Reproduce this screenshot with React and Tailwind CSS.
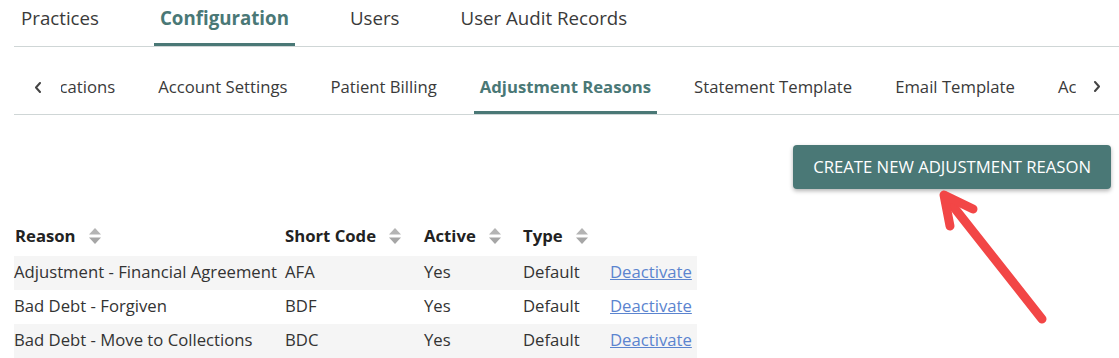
import React from 'react';

const mainTabs = ['Practices', 'Configuration', 'Users', 'User Audit Records'];
const subTabs = [
  'Notifications',
  'Account Settings',
  'Patient Billing',
  'Adjustment Reasons',
  'Statement Template',
  'Email Template',
  'Account Types',
];

const rows = [
  { reason: 'Adjustment - Financial Agreement', code: 'AFA', active: 'Yes', type: 'Default' },
  { reason: 'Bad Debt - Forgiven', code: 'BDF', active: 'Yes', type: 'Default' },
  { reason: 'Bad Debt - Move to Collections', code: 'BDC', active: 'Yes', type: 'Default' },
];

function SortIcon() {
  return (
    <svg width="12" height="16" viewBox="0 0 12 16" className="ml-[13px] shrink-0">
      <path d="M6 0 L12 6.5 H0 Z" fill="#b4b4b4" />
      <path d="M6 16 L12 9.5 H0 Z" fill="#a6a6a6" />
    </svg>
  );
}

function Chevron({ dir }) {
  return (
    <svg width="8" height="11" viewBox="0 0 8 11">
      <path
        d={dir === 'left' ? 'M6 1 L2 5.5 L6 10' : 'M2 1 L6 5.5 L2 10'}
        fill="none"
        stroke="#444"
        strokeWidth="2"
        strokeLinecap="round"
        strokeLinejoin="round"
      />
    </svg>
  );
}

function Th({ children, w }) {
  return (
    <th className={`${w} pl-[1px] pt-[3px] pb-[9px] text-left font-bold`}>
      <div className="flex items-center">
        <span>{children}</span>
        <SortIcon />
      </div>
    </th>
  );
}

export default function App() {
  return (
    <div
      className="relative w-[1119px] h-[358px] overflow-hidden bg-white text-[#333]"
      style={{ fontFamily: '"Open Sans", "DejaVu Sans", sans-serif' }}
    >
      {/* main tabs */}
      <nav className="ml-[14px] pl-[1px] flex gap-[49px] border-b border-[#cfd6d6]">
        {mainTabs.map((t) => (
          <div
            key={t}
            className={`h-[46px] px-[6px] pt-[5px] text-[18.7px] leading-[26px] border-b-[3px] ${
              t === 'Configuration'
                ? 'border-[#4a7876] text-[#4a7876] font-bold'
                : 'border-transparent text-[#3a3a3a]'
            }`}
          >
            {t}
          </div>
        ))}
      </nav>

      {/* sub tabs */}
      <div className="ml-[14px] mt-[20px] flex border-b border-[#cfd6d6]">
        <button className="w-[47px] h-[47px] flex items-start justify-center pt-[15px] pl-[1px]">
          <Chevron dir="left" />
        </button>
        <div className="flex-1 overflow-hidden">
          <div className="flex gap-[31px] ml-[-50px] whitespace-nowrap">
            {subTabs.map((t) => (
              <div
                key={t}
                className={`h-[47px] px-[6px] pt-[9px] text-[16.7px] leading-[22px] border-b-[3px] ${
                  t === 'Adjustment Reasons'
                    ? 'border-[#4a7876] text-[#4a7876] font-bold'
                    : 'border-transparent text-[#3a3a3a]'
                }`}
              >
                {t}
              </div>
            ))}
          </div>
        </div>
        <button className="w-[43px] h-[47px] flex items-start justify-center pt-[14px] pr-[2px]">
          <Chevron dir="right" />
        </button>
      </div>

      {/* actions */}
      <div className="flex justify-end mt-[30px] mr-[8px]">
        <button className="h-[44px] px-[20px] rounded-[4px] bg-[#4a7876] text-white text-[16.7px] leading-[22px] uppercase shadow-[0_2px_4px_rgba(0,0,0,0.3)]">
          Create New Adjustment Reason
        </button>
      </div>

      {/* table */}
      <table className="ml-[14px] mt-[33px] table-fixed border-collapse text-[16.7px] leading-[22px]">
        <thead>
          <tr className="text-[#222]">
            <Th w="w-[270px]">Reason</Th>
            <Th w="w-[139px]">Short Code</Th>
            <Th w="w-[99px]">Active</Th>
            <Th w="w-[88px]">Type</Th>
            <th className="w-[87px]"></th>
          </tr>
        </thead>
        <tbody>
          {rows.map((r, i) => (
            <tr key={r.code} className={i % 2 === 0 ? 'bg-[#f5f5f5]' : 'bg-white'}>
              <td className="pt-[5px] pb-[7px] whitespace-nowrap">{r.reason}</td>
              <td className="pt-[5px] pb-[7px] pl-[1px]">{r.code}</td>
              <td className="pt-[5px] pb-[7px] pl-[1px]">{r.active}</td>
              <td className="pt-[5px] pb-[7px] pl-[1px]">{r.type}</td>
              <td className="pt-[5px] pb-[7px]">
                <a href="#" className="text-[#5b84cf] underline">
                  Deactivate
                </a>
              </td>
            </tr>
          ))}
        </tbody>
      </table>

      {/* annotation arrow */}
      <svg className="absolute left-0 top-0 pointer-events-none" width="1119" height="358">
        <g stroke="#f24646" strokeWidth="9" strokeLinecap="round" strokeLinejoin="round" fill="none">
          <path d="M1042 319 L945 196" />
          <path d="M950 226 L944 195 L973 209" />
        </g>
      </svg>
    </div>
  );
}
